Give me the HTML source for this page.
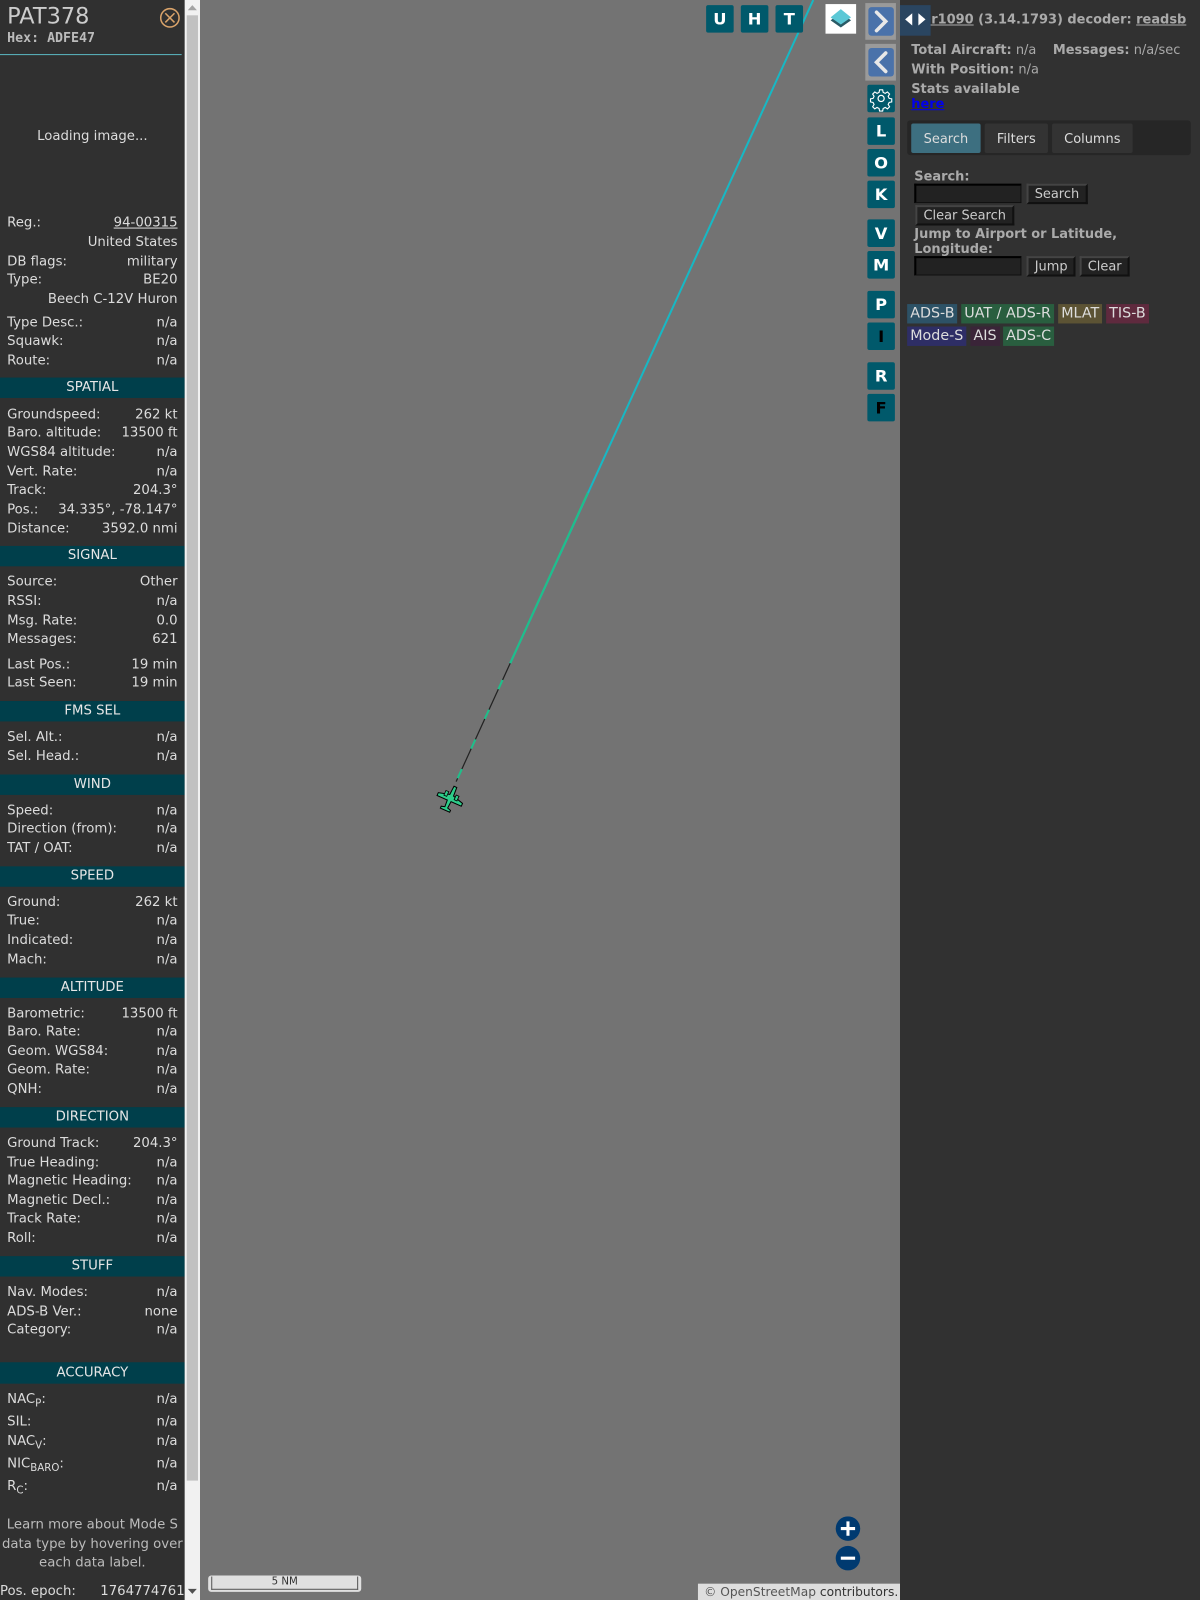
<!DOCTYPE html>
<html><head><meta charset="utf-8">
<style>
html,body{margin:0;padding:0;width:1200px;height:1600px;overflow:hidden;background:#737373;}
#w{position:absolute;left:0;top:0;width:1176px;height:1568px;transform:scale(1.020408);transform-origin:0 0;font-family:"DejaVu Sans","Liberation Sans",sans-serif;font-size:13px;}
#lp{position:absolute;left:0;top:0;width:181px;height:1568px;background:#303030;color:#dcdcdc;overflow:hidden;}
#rows{position:absolute;left:0;top:2px;width:181px;height:1568px;}
#sb{position:absolute;left:181px;top:0;width:15px;height:1568px;background:#f1f1f1;}
#thumb{position:absolute;left:2px;top:15px;width:11px;height:1436px;background:#c1c1c1;}
.r{position:absolute;left:7px;width:167px;height:16px;line-height:16px;white-space:nowrap;}
.r .v{position:absolute;right:0;top:0;}
.h{position:absolute;left:0;width:181px;height:20px;line-height:20px;background:#003f4b;color:#e6e6e6;text-align:center;}
#map{position:absolute;left:196px;top:0;width:686px;height:1568px;background:#737373;}
.btn{position:absolute;width:27px;height:27px;background:#00596b;color:#fff;font-weight:bold;font-size:16px;text-align:center;line-height:27px;border-radius:2px;}
#rp{position:absolute;left:882px;top:0;width:294px;height:1568px;background:#313131;color:#aaa;font-size:12.7px;}
.b{font-weight:bold;color:#aaa;}
.lbl{position:absolute;padding:0 3px;height:19px;line-height:19px;font-size:14px;color:#ddd;}
.ib{position:absolute;background:#222;border:1px solid #111;border-top:2px solid #000;border-left:2px solid #000;height:16px;}
.pb{position:absolute;background:#222;border:2px solid #111;border-top-color:#444;border-left-color:#444;color:#ccc;height:16px;line-height:16px;padding:0 6px;font-size:12.7px;}
</style></head><body><div id="w">
<div id="lp">
<div style="position:absolute;left:7px;top:4px;font-size:22px;color:#ccc;">PAT378</div>
<div style="position:absolute;left:7px;top:30px;font-size:13px;font-weight:bold;color:#bbb;font-family:'DejaVu Sans Mono','Liberation Mono',monospace;">Hex: ADFE47</div>
<svg style="position:absolute;left:156px;top:7px" width="21" height="21"><circle cx="10.5" cy="10.5" r="9" fill="none" stroke="#d9a36a" stroke-width="1.5"/><path d="M6 6L15 15M15 6L6 15" stroke="#d9a36a" stroke-width="1.5"/></svg>
<div style="position:absolute;left:0;top:53px;width:178px;height:1px;background:#5ab5c0;"></div>
<div id="rows">
<div style="position:absolute;left:0;top:124px;width:181px;text-align:center;">Loading image...</div>
<div class="r" style="top:209px">Reg.:<span class="v" style="text-decoration:underline">94-00315</span></div>
<div class="r" style="top:228px"><span class="v">United States</span></div>
<div class="r" style="top:247px">DB flags:<span class="v">military</span></div>
<div class="r" style="top:265px">Type:<span class="v">BE20</span></div>
<div class="r" style="top:284px"><span class="v">Beech C-12V Huron</span></div>
<div class="r" style="top:307px">Type Desc.:<span class="v">n/a</span></div>
<div class="r" style="top:325px">Squawk:<span class="v">n/a</span></div>
<div class="r" style="top:344px">Route:<span class="v">n/a</span></div>
<div class="h" style="top:368px">SPATIAL</div>
<div class="r" style="top:397px">Groundspeed:<span class="v">262 kt</span></div>
<div class="r" style="top:415px">Baro. altitude:<span class="v">13500 ft</span></div>
<div class="r" style="top:434px">WGS84 altitude:<span class="v">n/a</span></div>
<div class="r" style="top:453px">Vert. Rate:<span class="v">n/a</span></div>
<div class="r" style="top:471px">Track:<span class="v">204.3°</span></div>
<div class="r" style="top:490px">Pos.:<span class="v">34.335°, -78.147°</span></div>
<div class="r" style="top:509px">Distance:<span class="v">3592.0 nmi</span></div>
<div class="h" style="top:533px">SIGNAL</div>
<div class="r" style="top:561px">Source:<span class="v">Other</span></div>
<div class="r" style="top:580px">RSSI:<span class="v">n/a</span></div>
<div class="r" style="top:599px">Msg. Rate:<span class="v">0.0</span></div>
<div class="r" style="top:617px">Messages:<span class="v">621</span></div>
<div class="r" style="top:642px">Last Pos.:<span class="v">19 min</span></div>
<div class="r" style="top:660px">Last Seen:<span class="v">19 min</span></div>
<div class="h" style="top:685px">FMS SEL</div>
<div class="r" style="top:713px">Sel. Alt.:<span class="v">n/a</span></div>
<div class="r" style="top:732px">Sel. Head.:<span class="v">n/a</span></div>
<div class="h" style="top:757px">WIND</div>
<div class="r" style="top:785px">Speed:<span class="v">n/a</span></div>
<div class="r" style="top:803px">Direction (from):<span class="v">n/a</span></div>
<div class="r" style="top:822px">TAT / OAT:<span class="v">n/a</span></div>
<div class="h" style="top:847px">SPEED</div>
<div class="r" style="top:875px">Ground:<span class="v">262 kt</span></div>
<div class="r" style="top:893px">True:<span class="v">n/a</span></div>
<div class="r" style="top:912px">Indicated:<span class="v">n/a</span></div>
<div class="r" style="top:931px">Mach:<span class="v">n/a</span></div>
<div class="h" style="top:956px">ALTITUDE</div>
<div class="r" style="top:984px">Barometric:<span class="v">13500 ft</span></div>
<div class="r" style="top:1002px">Baro. Rate:<span class="v">n/a</span></div>
<div class="r" style="top:1021px">Geom. WGS84:<span class="v">n/a</span></div>
<div class="r" style="top:1039px">Geom. Rate:<span class="v">n/a</span></div>
<div class="r" style="top:1058px">QNH:<span class="v">n/a</span></div>
<div class="h" style="top:1083px">DIRECTION</div>
<div class="r" style="top:1111px">Ground Track:<span class="v">204.3°</span></div>
<div class="r" style="top:1130px">True Heading:<span class="v">n/a</span></div>
<div class="r" style="top:1148px">Magnetic Heading:<span class="v">n/a</span></div>
<div class="r" style="top:1167px">Magnetic Decl.:<span class="v">n/a</span></div>
<div class="r" style="top:1185px">Track Rate:<span class="v">n/a</span></div>
<div class="r" style="top:1204px">Roll:<span class="v">n/a</span></div>
<div class="h" style="top:1229px">STUFF</div>
<div class="r" style="top:1257px">Nav. Modes:<span class="v">n/a</span></div>
<div class="r" style="top:1276px">ADS-B Ver.:<span class="v">none</span></div>
<div class="r" style="top:1294px">Category:<span class="v">n/a</span></div>
<div class="h" style="top:1333px;height:21px;line-height:21px">ACCURACY</div>
<div class="r" style="top:1362px">NAC<sub style="font-size:10px">P</sub>:<span class="v">n/a</span></div>
<div class="r" style="top:1384px">SIL:<span class="v">n/a</span></div>
<div class="r" style="top:1403px">NAC<sub style="font-size:10px">V</sub>:<span class="v">n/a</span></div>
<div class="r" style="top:1425px">NIC<sub style="font-size:10px">BARO</sub>:<span class="v">n/a</span></div>
<div class="r" style="top:1447px">R<sub style="font-size:10px">C</sub>:<span class="v">n/a</span></div>
<div style="position:absolute;left:0;top:1484px;width:181px;text-align:center;line-height:18.5px;color:#bbb;">Learn more about Mode S data type by hovering over each data label.</div>
<div class="r" style="top:1550px;left:0;width:181px">Pos. epoch:<span class="v">1764774761</span></div>
</div>
</div>
<div id="sb"><div id="thumb"></div>
<svg style="position:absolute;left:3px;top:5px" width="9" height="6"><path d="M0 5L4.5 0L9 5Z" fill="#a3a3a3"/></svg>
<svg style="position:absolute;left:3px;top:1557px" width="9" height="6"><path d="M0 0L4.5 5L9 0Z" fill="#505050"/></svg>
</div>
<div id="map">
<svg style="position:absolute;left:0;top:0" width="686" height="1568">
<line x1="601" y1="0" x2="304" y2="650" stroke="#17b8c4" stroke-width="2"/>
<line x1="380" y1="483" x2="304" y2="650" stroke="#1fbf8a" stroke-width="2"/>
<line x1="304" y1="650" x2="251" y2="766" stroke="#222" stroke-width="1.2"/>
<line x1="304" y1="650" x2="251" y2="766" stroke="#1fbf8a" stroke-width="2" stroke-dasharray="10 22" stroke-dashoffset="14"/>
<g transform="translate(245,783) rotate(24)">
<path d="M-1.5,-13 L1.5,-13 L2,-4 L13,-1 L13,2 L2,2 L1.5,9 L5,10 L5,12 L-5,12 L-5,10 L-1.5,9 L-2,2 L-13,2 L-13,-1 L-2,-4 Z" fill="#2ecc8a" stroke="#000" stroke-width="1"/>
<rect x="-7" y="-6" width="3" height="5" fill="#2ecc8a" stroke="#000" stroke-width="0.8"/>
<rect x="4" y="-6" width="3" height="5" fill="#2ecc8a" stroke="#000" stroke-width="0.8"/>
</g>
</svg>
<div class="btn" style="left:496px;top:5px">U</div>
<div class="btn" style="left:530px;top:5px">H</div>
<div class="btn" style="left:564px;top:5px">T</div>
<div style="position:absolute;left:613px;top:4px;width:30px;height:29px;background:#fff;"></div>
<svg style="position:absolute;left:616px;top:6px" width="24" height="24"><path d="M12 6L22 14L12 21L2 14Z" fill="#2a5b66"/><path d="M12 3L22 11L12 18L2 11Z" fill="#5cc8d6"/></svg>
<div style="position:absolute;left:652px;top:3px;width:30px;height:36px;background:#9a9a9a;"></div>
<div style="position:absolute;left:655px;top:7px;width:25px;height:28px;background:#4a72aa;border-radius:3px;"></div>
<svg style="position:absolute;left:655px;top:7px" width="25" height="28"><path d="M8 5L17 14L8 23" fill="none" stroke="#e8e8e8" stroke-width="3.5" stroke-linecap="round"/></svg>
<div style="position:absolute;left:652px;top:43px;width:30px;height:36px;background:#9a9a9a;"></div>
<div style="position:absolute;left:655px;top:47px;width:25px;height:28px;background:#4a72aa;border-radius:3px;"></div>
<svg style="position:absolute;left:655px;top:47px" width="25" height="28"><path d="M17 5L8 14L17 23" fill="none" stroke="#e8e8e8" stroke-width="3.5" stroke-linecap="round"/></svg>
<div class="btn" style="left:654px;top:83px"></div>
<svg style="position:absolute;left:654px;top:83px" width="27" height="27"><circle cx="13.5" cy="13.5" r="3" fill="none" stroke="#fff" stroke-width="1.2"/><path d="M12 5h3l.5 2.5 2 1 2.2-1.4 2.1 2.1-1.4 2.2 1 2 2.5.5v3l-2.5.5-1 2 1.4 2.2-2.1 2.1-2.2-1.4-2 1-.5 2.5h-3l-.5-2.5-2-1-2.2 1.4-2.1-2.1 1.4-2.2-1-2-2.5-.5v-3l2.5-.5 1-2-1.4-2.2 2.1-2.1 2.2 1.4 2-1z" fill="none" stroke="#fff" stroke-width="1.1"/></svg>
<div class="btn" style="left:654px;top:115px">L</div>
<div class="btn" style="left:654px;top:146px">O</div>
<div class="btn" style="left:654px;top:177px">K</div>
<div class="btn" style="left:654px;top:215px">V</div>
<div class="btn" style="left:654px;top:246px">M</div>
<div class="btn" style="left:654px;top:285px">P</div>
<div class="btn" style="left:654px;top:316px;color:#000">I</div>
<div class="btn" style="left:654px;top:355px">R</div>
<div class="btn" style="left:654px;top:386px;color:#000">F</div>
<svg style="position:absolute;left:622px;top:1486px" width="26" height="56"><circle cx="13" cy="12" r="12" fill="#003a70"/><path d="M6 12H20M13 5V19" stroke="#fff" stroke-width="3"/><circle cx="13" cy="41" r="12" fill="#003a70"/><path d="M6 41H20" stroke="#fff" stroke-width="3"/></svg>
<div style="position:absolute;left:8px;top:1544px;width:150px;height:16px;background:#e0e0e0;border-radius:3px;"></div>
<div style="position:absolute;left:11px;top:1545px;width:142px;height:12px;border:1px solid #555;border-top:none;font-size:10px;text-align:center;line-height:12px;color:#333;">5 NM</div>
<div style="position:absolute;left:488px;top:1552px;width:198px;height:16px;background:#dedede;color:#333;font-size:12px;line-height:16px;padding-left:6px;box-sizing:border-box;"><span style="color:#555">© OpenStreetMap</span> contributors.</div>
</div>
<div id="rp">
<div class="b" style="position:absolute;left:16px;top:11px;white-space:nowrap;"><u>tar1090</u> (3.14.1793) decoder: <u>readsb</u></div>
<div style="position:absolute;left:0;top:5px;width:30px;height:30px;background:#2a4560;"></div>
<svg style="position:absolute;left:4px;top:12px" width="22" height="14"><path d="M1 7L8 1V13Z M21 7L14 1V13Z" fill="#fff"/></svg>
<div style="position:absolute;left:11px;top:41px;white-space:nowrap;"><span class="b">Total Aircraft:</span> n/a &nbsp;&nbsp; <span class="b">Messages:</span> n/a/sec</div>
<div style="position:absolute;left:11px;top:60px;"><span class="b">With Position:</span> n/a</div>
<div class="b" style="position:absolute;left:11px;top:79px;">Stats available</div>
<div style="position:absolute;left:11px;top:94px;color:#00e;font-weight:bold;text-decoration:underline;">here</div>
<div style="position:absolute;left:7px;top:118px;width:278px;height:34px;background:#262626;border-radius:3px;"></div>
<div style="position:absolute;left:11px;top:121px;width:68px;height:29px;background:#3d6f80;color:#ddd;text-align:center;line-height:29px;border-radius:2px;">Search</div>
<div style="position:absolute;left:83px;top:121px;width:62px;height:29px;background:#333;color:#ddd;text-align:center;line-height:29px;border-radius:2px;">Filters</div>
<div style="position:absolute;left:149px;top:121px;width:79px;height:29px;background:#333;color:#ddd;text-align:center;line-height:29px;border-radius:2px;">Columns</div>
<div class="b" style="position:absolute;left:14px;top:165px;">Search:</div>
<div class="ib" style="left:14px;top:180px;width:102px;"></div>
<div class="pb" style="left:124px;top:180px;">Search</div>
<div class="pb" style="left:15px;top:201px;">Clear Search</div>
<div class="b" style="position:absolute;left:14px;top:221px;line-height:15px;">Jump to Airport or Latitude,<br>Longitude:</div>
<div class="ib" style="left:14px;top:251px;width:102px;"></div>
<div class="pb" style="left:124px;top:251px;">Jump</div>
<div class="pb" style="left:176px;top:251px;">Clear</div>
<div class="lbl" style="left:7px;top:298px;background:#2d5266;">ADS-B</div>
<div class="lbl" style="left:60px;top:298px;background:#295e3f;">UAT / ADS-R</div>
<div class="lbl" style="left:155px;top:298px;background:#5c5334;">MLAT</div>
<div class="lbl" style="left:202px;top:298px;background:#5f2a3e;">TIS-B</div>
<div class="lbl" style="left:7px;top:320px;background:#2e2e66;">Mode-S</div>
<div class="lbl" style="left:69px;top:320px;background:#3a2438;">AIS</div>
<div class="lbl" style="left:101px;top:320px;background:#295e3f;">ADS-C</div>
</div>
</div></body></html>
